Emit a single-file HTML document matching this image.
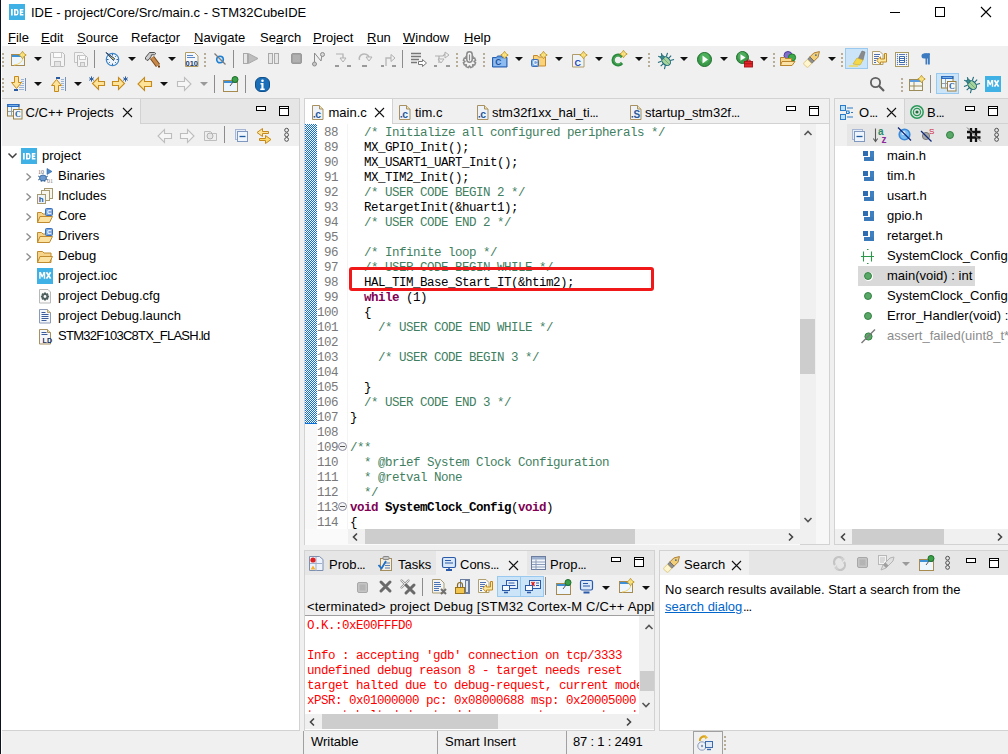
<!DOCTYPE html>
<html><head><meta charset="utf-8"><style>
html,body{margin:0;padding:0}
body{width:1008px;height:754px;overflow:hidden;position:relative;background:#f0f0f0;font-family:"Liberation Sans",sans-serif}
.a{position:absolute}
.s{font-family:"Liberation Sans",sans-serif;white-space:pre;line-height:normal}
.m{font-family:"Liberation Mono",monospace;white-space:pre;line-height:normal;letter-spacing:-0.5px}
svg.a{overflow:visible}
</style></head><body>
<div class="a" style="left:0px;top:0px;width:1008px;height:46px;background:#fff;"></div>
<div class="a" style="left:0px;top:0px;width:1px;height:754px;background:#2b2f3a;"></div>
<svg class="a" style="left:9px;top:4px" width="16" height="16" viewBox="0 0 16 16"><rect width="16" height="16" fill="#3fb1e5"/><rect x="2" y="5" width="1.7" height="6.5" fill="#fff"/><path d="M5 5h2.2a2.3 2.3 0 0 1 2.3 2.3v1.9a2.3 2.3 0 0 1-2.3 2.3h-2.2zM6.6 6.4v3.7h0.6a0.9 0.9 0 0 0 0.9-0.9v-1.9a0.9 0.9 0 0 0-0.9-0.9z" fill="#fff" fill-rule="evenodd"/><path d="M10.8 5h3.6v1.4h-2v1.2h1.8v1.3h-1.8v1.2h2v1.4h-3.6z" fill="#fff"/></svg>
<div class="a s" style="left:31px;top:5.23px;font-size:13px;color:#000;">IDE - project/Core/Src/main.c - STM32CubeIDE</div>
<div class="a" style="left:890px;top:12px;width:10px;height:1px;background:#000;"></div>
<div class="a" style="left:935px;top:7px;width:8px;height:8px;border:1px solid #000;background:transparent;"></div>
<svg class="a" style="left:981px;top:7px" width="10" height="10" viewBox="0 0 10 10"><path d="M0 0L10 10M10 0L0 10" stroke="#000" stroke-width="1.1"/></svg>
<div class="a s" style="left:8px;top:30.23px;font-size:13px;color:#000;">File</div>
<div class="a s" style="left:41px;top:30.23px;font-size:13px;color:#000;">Edit</div>
<div class="a s" style="left:77px;top:30.23px;font-size:13px;color:#000;">Source</div>
<div class="a s" style="left:131px;top:30.23px;font-size:13px;color:#000;">Refactor</div>
<div class="a s" style="left:194px;top:30.23px;font-size:13px;color:#000;">Navigate</div>
<div class="a s" style="left:260px;top:30.23px;font-size:13px;color:#000;">Search</div>
<div class="a s" style="left:313px;top:30.23px;font-size:13px;color:#000;">Project</div>
<div class="a s" style="left:367px;top:30.23px;font-size:13px;color:#000;">Run</div>
<div class="a s" style="left:403px;top:30.23px;font-size:13px;color:#000;">Window</div>
<div class="a s" style="left:464px;top:30.23px;font-size:13px;color:#000;">Help</div>
<div class="a" style="left:8px;top:43px;width:8px;height:1px;background:#000;"></div>
<div class="a" style="left:41px;top:43px;width:9px;height:1px;background:#000;"></div>
<div class="a" style="left:77px;top:43px;width:9px;height:1px;background:#000;"></div>
<div class="a" style="left:165px;top:43px;width:5px;height:1px;background:#000;"></div>
<div class="a" style="left:194px;top:43px;width:9px;height:1px;background:#000;"></div>
<div class="a" style="left:276px;top:43px;width:7px;height:1px;background:#000;"></div>
<div class="a" style="left:313px;top:43px;width:9px;height:1px;background:#000;"></div>
<div class="a" style="left:367px;top:43px;width:9px;height:1px;background:#000;"></div>
<div class="a" style="left:403px;top:43px;width:12px;height:1px;background:#000;"></div>
<div class="a" style="left:464px;top:43px;width:9px;height:1px;background:#000;"></div>
<div class="a" style="left:1px;top:98px;width:297px;height:631px;border:1px solid #d2d2d2;background:#fff;"></div>
<div class="a" style="left:2px;top:99px;width:297px;height:24px;background:#e6e6e6;"></div>
<div class="a" style="left:2px;top:99px;width:138px;height:25px;background:#f0f0f0;"></div>
<div class="a" style="left:140px;top:99px;width:1px;height:24px;background:#d2d2d2;"></div>
<div class="a" style="left:140px;top:123px;width:159px;height:1px;background:#d2d2d2;"></div>
<div class="a" style="left:2px;top:124px;width:297px;height:22px;background:#f0f0f0;"></div>
<div class="a s" style="left:25.5px;top:105.23px;font-size:13px;color:#000;">C/C++ Projects</div>
<div class="a" style="left:304px;top:98px;width:524px;height:445px;border:1px solid #d2d2d2;background:#fff;"></div>
<div class="a" style="left:305px;top:99px;width:524px;height:25px;background:#f0f0f0;"></div>
<div class="a" style="left:305px;top:99px;width:87px;height:25px;background:#fff;"></div>
<div class="a" style="left:392px;top:99px;width:1px;height:25px;background:#d2d2d2;"></div>
<div class="a" style="left:392px;top:123px;width:437px;height:1px;background:#d2d2d2;"></div>
<div class="a s" style="left:328.5px;top:105.23px;font-size:13px;color:#000;">main.c</div>
<div class="a s" style="left:415px;top:105.23px;font-size:13px;color:#000;">tim.c</div>
<div class="a s" style="left:492px;top:105.23px;font-size:13px;color:#000;">stm32f1xx_hal_ti<span style="letter-spacing:-0.9px">...</span></div>
<div class="a s" style="left:645px;top:105.23px;font-size:13px;color:#000;">startup_stm32f<span style="letter-spacing:-0.9px">...</span></div>
<div class="a" style="left:834px;top:98px;width:173px;height:445px;border:1px solid #d2d2d2;background:#fff;"></div>
<div class="a" style="left:835px;top:99px;width:173px;height:24px;background:#e6e6e6;"></div>
<div class="a" style="left:835px;top:99px;width:69px;height:25px;background:#f0f0f0;"></div>
<div class="a" style="left:904px;top:99px;width:1px;height:24px;background:#d2d2d2;"></div>
<div class="a" style="left:904px;top:123px;width:104px;height:1px;background:#d2d2d2;"></div>
<div class="a" style="left:835px;top:124px;width:173px;height:22px;background:#f0f0f0;"></div>
<div class="a" style="left:847px;top:124px;width:161px;height:22px;background:#e6e6e6;"></div>
<div class="a s" style="left:859px;top:105.23px;font-size:13px;color:#000;">O<span style="letter-spacing:-0.9px">...</span></div>
<div class="a s" style="left:927px;top:105.23px;font-size:13px;color:#000;">B<span style="letter-spacing:-0.9px">...</span></div>
<div class="a" style="left:304px;top:550px;width:349px;height:179px;border:1px solid #d2d2d2;background:#fff;"></div>
<div class="a" style="left:305px;top:551px;width:349px;height:24px;background:#e6e6e6;"></div>
<div class="a" style="left:436px;top:551px;width:91px;height:24px;background:#f0f0f0;"></div>
<div class="a" style="left:305px;top:575px;width:349px;height:40px;background:#f0f0f0;"></div>
<div class="a" style="left:305px;top:615px;width:349px;height:1px;background:#a0a0a0;"></div>
<div class="a s" style="left:329px;top:557.24px;font-size:13px;color:#000;">Prob<span style="letter-spacing:-0.9px">...</span></div>
<div class="a s" style="left:398px;top:557.24px;font-size:13px;color:#000;">Tasks</div>
<div class="a s" style="left:460px;top:557.24px;font-size:13px;color:#000;">Cons<span style="letter-spacing:-0.9px">...</span></div>
<div class="a s" style="left:550px;top:557.24px;font-size:13px;color:#000;">Prop<span style="letter-spacing:-0.9px">...</span></div>
<div class="a s" style="left:307px;top:599.24px;font-size:13px;color:#000;letter-spacing:0.189px;">&lt;terminated&gt; project Debug [STM32 Cortex-M C/C++ Appl</div>
<div class="a" style="left:659px;top:550px;width:348px;height:179px;border:1px solid #d2d2d2;background:#fff;"></div>
<div class="a" style="left:660px;top:551px;width:348px;height:24px;background:#e6e6e6;"></div>
<div class="a" style="left:660px;top:551px;width:89px;height:24px;background:#f0f0f0;"></div>
<div class="a s" style="left:684px;top:557.24px;font-size:13px;color:#000;">Search</div>
<div class="a s" style="left:665px;top:582.24px;font-size:13px;color:#000;">No search results available. Start a search from the</div>
<div class="a s" style="left:665px;top:599.24px;font-size:13px;color:#0066cc;text-decoration:underline">search dialog</div>
<div class="a s" style="left:743px;top:599.24px;font-size:13px;color:#000;"><span style="letter-spacing:-0.9px">...</span></div>
<div class="a s" style="left:311px;top:734.24px;font-size:13px;color:#000;">Writable</div>
<div class="a s" style="left:445px;top:734.24px;font-size:13px;color:#000;">Smart Insert</div>
<div class="a s" style="left:573px;top:734.24px;font-size:13px;color:#000;letter-spacing:-0.215px;">87 : 1 : 2491</div>
<div class="a s" style="left:42px;top:148.24px;font-size:13px;color:#000;">project</div>
<div class="a s" style="left:58px;top:168.24px;font-size:13px;color:#000;">Binaries</div>
<div class="a s" style="left:58px;top:188.24px;font-size:13px;color:#000;">Includes</div>
<div class="a s" style="left:58px;top:208.24px;font-size:13px;color:#000;">Core</div>
<div class="a s" style="left:58px;top:228.24px;font-size:13px;color:#000;">Drivers</div>
<div class="a s" style="left:58px;top:248.24px;font-size:13px;color:#000;">Debug</div>
<div class="a s" style="left:58px;top:268.24px;font-size:13px;color:#000;">project.ioc</div>
<div class="a s" style="left:58px;top:288.24px;font-size:13px;color:#000;">project Debug.cfg</div>
<div class="a s" style="left:58px;top:308.24px;font-size:13px;color:#000;">project Debug.launch</div>
<div class="a s" style="left:58px;top:328.24px;font-size:13px;color:#000;letter-spacing:-0.734px;">STM32F103C8TX_FLASH.ld</div>
<div class="a" style="left:305px;top:124px;width:12px;height:421px;background:#f8f8f8;"></div>
<div class="a" style="left:305px;top:423px;width:12px;height:1px;background:#0a6fd8;"></div>
<div class="a" style="left:305px;top:124px;width:12px;height:299px;background:#3d8ee8;background-image:repeating-conic-gradient(#0a6fd8 0 25%,#fff 0 50%);background-size:2px 2px;background-position:0 1px"></div>
<div class="a" style="left:347px;top:124px;width:1px;height:405px;background:#f4f4f4;"></div>
<div class="a m" style="left:317px;top:125.59px;font-size:12.5px;color:#787878;"> 88</div>
<div class="a m" style="left:350px;top:125.59px;font-size:12.5px;color:#000;">  <span style="color:#3f7f5f;">/* Initialize all configured peripherals */</span></div>
<div class="a m" style="left:317px;top:140.59px;font-size:12.5px;color:#787878;"> 89</div>
<div class="a m" style="left:350px;top:140.59px;font-size:12.5px;color:#000;">  MX_GPIO_Init();</div>
<div class="a m" style="left:317px;top:155.59px;font-size:12.5px;color:#787878;"> 90</div>
<div class="a m" style="left:350px;top:155.59px;font-size:12.5px;color:#000;">  MX_USART1_UART_Init();</div>
<div class="a m" style="left:317px;top:170.59px;font-size:12.5px;color:#787878;"> 91</div>
<div class="a m" style="left:350px;top:170.59px;font-size:12.5px;color:#000;">  MX_TIM2_Init();</div>
<div class="a m" style="left:317px;top:185.59px;font-size:12.5px;color:#787878;"> 92</div>
<div class="a m" style="left:350px;top:185.59px;font-size:12.5px;color:#000;">  <span style="color:#3f7f5f;">/* USER CODE BEGIN 2 */</span></div>
<div class="a m" style="left:317px;top:200.59px;font-size:12.5px;color:#787878;"> 93</div>
<div class="a m" style="left:350px;top:200.59px;font-size:12.5px;color:#000;">  RetargetInit(&amp;huart1);</div>
<div class="a m" style="left:317px;top:215.59px;font-size:12.5px;color:#787878;"> 94</div>
<div class="a m" style="left:350px;top:215.59px;font-size:12.5px;color:#000;">  <span style="color:#3f7f5f;">/* USER CODE END 2 */</span></div>
<div class="a m" style="left:317px;top:230.59px;font-size:12.5px;color:#787878;"> 95</div>
<div class="a m" style="left:317px;top:245.59px;font-size:12.5px;color:#787878;"> 96</div>
<div class="a m" style="left:350px;top:245.59px;font-size:12.5px;color:#000;">  <span style="color:#3f7f5f;">/* Infinite loop */</span></div>
<div class="a m" style="left:317px;top:260.59px;font-size:12.5px;color:#787878;"> 97</div>
<div class="a m" style="left:350px;top:260.59px;font-size:12.5px;color:#000;">  <span style="color:#3f7f5f;">/* USER CODE BEGIN WHILE */</span></div>
<div class="a m" style="left:317px;top:275.59px;font-size:12.5px;color:#787878;"> 98</div>
<div class="a m" style="left:350px;top:275.59px;font-size:12.5px;color:#000;">  HAL_TIM_Base_Start_IT(&amp;htim2);</div>
<div class="a m" style="left:317px;top:290.59px;font-size:12.5px;color:#787878;"> 99</div>
<div class="a m" style="left:350px;top:290.59px;font-size:12.5px;color:#000;">  <span style="color:#7f0055;font-weight:bold;">while</span> (1)</div>
<div class="a m" style="left:317px;top:305.59px;font-size:12.5px;color:#787878;">100</div>
<div class="a m" style="left:350px;top:305.59px;font-size:12.5px;color:#000;">  {</div>
<div class="a m" style="left:317px;top:320.59px;font-size:12.5px;color:#787878;">101</div>
<div class="a m" style="left:350px;top:320.59px;font-size:12.5px;color:#000;">    <span style="color:#3f7f5f;">/* USER CODE END WHILE */</span></div>
<div class="a m" style="left:317px;top:335.59px;font-size:12.5px;color:#787878;">102</div>
<div class="a m" style="left:317px;top:350.59px;font-size:12.5px;color:#787878;">103</div>
<div class="a m" style="left:350px;top:350.59px;font-size:12.5px;color:#000;">    <span style="color:#3f7f5f;">/* USER CODE BEGIN 3 */</span></div>
<div class="a m" style="left:317px;top:365.59px;font-size:12.5px;color:#787878;">104</div>
<div class="a m" style="left:317px;top:380.59px;font-size:12.5px;color:#787878;">105</div>
<div class="a m" style="left:350px;top:380.59px;font-size:12.5px;color:#000;">  }</div>
<div class="a m" style="left:317px;top:395.59px;font-size:12.5px;color:#787878;">106</div>
<div class="a m" style="left:350px;top:395.59px;font-size:12.5px;color:#000;">  <span style="color:#3f7f5f;">/* USER CODE END 3 */</span></div>
<div class="a m" style="left:317px;top:410.59px;font-size:12.5px;color:#787878;">107</div>
<div class="a m" style="left:350px;top:410.59px;font-size:12.5px;color:#000;">}</div>
<div class="a m" style="left:317px;top:425.59px;font-size:12.5px;color:#787878;">108</div>
<div class="a m" style="left:317px;top:440.59px;font-size:12.5px;color:#787878;">109</div>
<div class="a m" style="left:350px;top:440.59px;font-size:12.5px;color:#000;"><span style="color:#3f7f5f;">/**</span></div>
<div class="a m" style="left:317px;top:455.59px;font-size:12.5px;color:#787878;">110</div>
<div class="a m" style="left:350px;top:455.59px;font-size:12.5px;color:#000;"><span style="color:#3f7f5f;">  * @brief System Clock Configuration</span></div>
<div class="a m" style="left:317px;top:470.59px;font-size:12.5px;color:#787878;">111</div>
<div class="a m" style="left:350px;top:470.59px;font-size:12.5px;color:#000;"><span style="color:#3f7f5f;">  * @retval None</span></div>
<div class="a m" style="left:317px;top:485.59px;font-size:12.5px;color:#787878;">112</div>
<div class="a m" style="left:350px;top:485.59px;font-size:12.5px;color:#000;"><span style="color:#3f7f5f;">  */</span></div>
<div class="a m" style="left:317px;top:500.59px;font-size:12.5px;color:#787878;">113</div>
<div class="a m" style="left:350px;top:500.59px;font-size:12.5px;color:#000;"><span style="color:#7f0055;font-weight:bold;">void</span> <span style="font-weight:bold;">SystemClock_Config</span>(<span style="color:#7f0055;font-weight:bold;">void</span>)</div>
<div class="a m" style="left:317px;top:515.59px;font-size:12.5px;color:#787878;">114</div>
<div class="a m" style="left:350px;top:515.59px;font-size:12.5px;color:#000;">{</div>
<div class="a" style="left:349px;top:267px;width:299px;height:18px;border:3px solid #f01818;border-radius:3px"></div>
<div class="a" style="left:800px;top:124px;width:16px;height:405px;background:#f0f0f0;"></div>
<div class="a" style="left:816px;top:124px;width:13px;height:420px;background:#f7f7f7;"></div>
<div class="a" style="left:800px;top:319px;width:15px;height:55px;background:#cdcdcd;"></div>
<div class="a" style="left:305px;top:529px;width:495px;height:16px;background:#fafafa;"></div>
<div class="a" style="left:348px;top:529px;width:452px;height:15px;background:#f0f0f0;"></div>
<div class="a" style="left:365px;top:529px;width:270px;height:15px;background:#cdcdcd;"></div>
<div class="a" style="left:800px;top:529px;width:16px;height:15px;background:#f0f0f0;"></div>
<div class="a" style="left:858px;top:266px;width:117px;height:20px;background:#d9d9d9;"></div>
<div class="a" style="left:863.5px;top:271.5px;width:9px;height:9px;border-radius:50%;background:#fff"></div>
<div class="a s" style="left:887px;top:148.24px;font-size:13px;color:#000;">main.h</div>
<div class="a s" style="left:887px;top:168.24px;font-size:13px;color:#000;">tim.h</div>
<div class="a s" style="left:887px;top:188.24px;font-size:13px;color:#000;">usart.h</div>
<div class="a s" style="left:887px;top:208.24px;font-size:13px;color:#000;">gpio.h</div>
<div class="a s" style="left:887px;top:228.24px;font-size:13px;color:#000;">retarget.h</div>
<div class="a s" style="left:887px;top:248.24px;font-size:13px;color:#000;">SystemClock_Config(void)</div>
<div class="a s" style="left:887px;top:268.24px;font-size:13px;color:#000;">main(void) : int</div>
<div class="a s" style="left:887px;top:288.24px;font-size:13px;color:#000;">SystemClock_Config(void)</div>
<div class="a s" style="left:887px;top:308.24px;font-size:13px;color:#000;">Error_Handler(void) : void</div>
<div class="a s" style="left:887px;top:328.24px;font-size:13px;color:#8c8c8c;">assert_failed(uint8_t*, uint32_t) : void</div>
<div class="a" style="left:835px;top:529px;width:173px;height:15px;background:#f0f0f0;"></div>
<div class="a" style="left:852px;top:529px;width:92px;height:15px;background:#cdcdcd;"></div>
<div class="a" style="left:305px;top:616px;width:334px;height:96px;overflow:hidden">
<div class="a m" style="left:2px;top:2.59px;font-size:12.5px;color:#ff0000;">O.K.:0xE00FFFD0</div>
<div class="a m" style="left:2px;top:17.59px;font-size:12.5px;color:#ff0000;"></div>
<div class="a m" style="left:2px;top:32.59px;font-size:12.5px;color:#ff0000;">Info : accepting &#x27;gdb&#x27; connection on tcp/3333</div>
<div class="a m" style="left:2px;top:47.59px;font-size:12.5px;color:#ff0000;">undefined debug reason 8 - target needs reset</div>
<div class="a m" style="left:2px;top:62.59px;font-size:12.5px;color:#ff0000;">target halted due to debug-request, current mode: Thread</div>
<div class="a m" style="left:2px;top:77.59px;font-size:12.5px;color:#ff0000;">xPSR: 0x01000000 pc: 0x08000688 msp: 0x20005000</div>
<div class="a m" style="left:2px;top:92.59px;font-size:12.5px;color:#ff0000;">target halted due to debug-request, current mode: Thread</div>
</div>
<div class="a" style="left:639px;top:616px;width:15px;height:98px;background:#f0f0f0;"></div>
<div class="a" style="left:640px;top:671px;width:14px;height:20px;background:#cdcdcd;"></div>
<div class="a" style="left:305px;top:714px;width:349px;height:15px;background:#f0f0f0;"></div>
<div class="a" style="left:322px;top:714px;width:176px;height:15px;background:#cdcdcd;"></div>
<div class="a" style="left:303px;top:731px;width:1px;height:23px;background:#a0a0a0;"></div>
<div class="a" style="left:437px;top:731px;width:1px;height:23px;background:#a0a0a0;"></div>
<div class="a" style="left:566px;top:731px;width:1px;height:23px;background:#a0a0a0;"></div>
<div class="a" style="left:693px;top:731px;width:28px;height:22px;border:1px solid #a0a0a0;background:#f0f0f0;"></div>
<div class="a" style="left:2px;top:53px;width:2px;height:2px;background:#b8ad98;"></div>
<div class="a" style="left:2px;top:57px;width:2px;height:2px;background:#b8ad98;"></div>
<div class="a" style="left:2px;top:61px;width:2px;height:2px;background:#b8ad98;"></div>
<div class="a" style="left:2px;top:65px;width:2px;height:2px;background:#b8ad98;"></div>
<svg class="a" style="left:11px;top:52px" width="16" height="16" viewBox="0 0 16 16"><rect x="0.5" y="2.5" width="13" height="11" fill="#eef6fd" stroke="#a68a4e"/><rect x="1" y="3" width="12" height="2" fill="#3d8fd6"/><path d="M3 13 Q11 12 12 6" stroke="#f2d36b" fill="none"/><g transform="translate(7.5,-1)"><path d="M4 0.3 L5.4 2.6 L7.7 4 L5.4 5.4 L4 7.7 L2.6 5.4 L0.3 4 L2.6 2.6 Z" fill="#fff2b3" stroke="#c39a26" stroke-width="1"/><path d="M4 2V6M2 4H6" stroke="#f7dc6a" stroke-width="1"/></g></svg>
<svg class="a" style="left:34px;top:57px" width="8" height="4" viewBox="0 0 8 4"><path d="M0 0H8L4 4Z" fill="#111"/></svg>
<svg class="a" style="left:50px;top:52px" width="16" height="16" viewBox="0 0 16 16"><path d="M1.5 0.5h11l2 2v11a1 1 0 0 1-1 1h-12a1 1 0 0 1-1-1v-12a1 1 0 0 1 1-1z" fill="#f4f4f4" stroke="#b8b8b8"/><rect x="3.5" y="0.5" width="8" height="5" fill="#fbfbfb" stroke="#c8c8c8"/><rect x="4.5" y="9.5" width="6" height="5" fill="#e4e4e4" stroke="#c0c0c0"/></svg>
<svg class="a" style="left:73px;top:52px" width="16" height="16" viewBox="0 0 16 16"><path d="M1.5 0.5h8l2 2v8h-10z" fill="#f4f4f4" stroke="#c4c4c4"/><path d="M4.5 3.5h8l2 2v8a1 1 0 0 1-1 1h-8a1 1 0 0 1-1-1z" fill="#f4f4f4" stroke="#b8b8b8"/><rect x="6.5" y="3.5" width="6" height="4" fill="#fbfbfb" stroke="#c8c8c8"/><rect x="7.5" y="10.5" width="4" height="4" fill="#e4e4e4" stroke="#c0c0c0"/></svg>
<div class="a" style="left:94px;top:50px;width:1px;height:18px;background:#8c8c8c;"></div>
<svg class="a" style="left:105px;top:52px" width="16" height="16" viewBox="0 0 16 16"><circle cx="7.5" cy="7.5" r="6.2" fill="#eef4fb" stroke="#3b85c8" stroke-width="1.2"/><path d="M7.5 2v1.5M7.5 11.5V13M2 7.5h1.5M11.5 7.5H13M3.8 3.8l1 1M10.2 10.2l1 1M3.8 11.2l1-1M11.2 3.8l-1 1" stroke="#22508a" stroke-width="0.9"/><path d="M1 0.5L8.5 8.5L9.5 6.5Z" fill="#f0d36a" stroke="#1f3f6e" stroke-width="1"/></svg>
<svg class="a" style="left:128px;top:57px" width="8" height="4" viewBox="0 0 8 4"><path d="M0 0H8L4 4Z" fill="#111"/></svg>
<svg class="a" style="left:144px;top:51px" width="17" height="17" viewBox="0 0 17 17"><path d="M8 6.5L14 14.5" stroke="#7a4a1a" stroke-width="5.2" stroke-linecap="butt"/><path d="M8 6.5L14 14.5" stroke="#c9894a" stroke-width="3.2"/><path d="M14 15.5h2" stroke="#6a3a10" stroke-width="2"/><path d="M1.5 6.5L4.5 2.8L5.5 1.5H10.5L11.8 2.6L10.5 3.8H7.5L7 5.5L5 8.5L3 9.5L1.5 8Z" fill="#cdcdcd" stroke="#3c3c3c" stroke-width="0.9"/></svg>
<svg class="a" style="left:168px;top:57px" width="8" height="4" viewBox="0 0 8 4"><path d="M0 0H8L4 4Z" fill="#111"/></svg>
<svg class="a" style="left:185px;top:52px" width="16" height="16" viewBox="0 0 16 16"><path d="M0.5 0.5h9l3.5 3.5v10.5h-12.5z" fill="#f4f7fb" stroke="#b29c62"/><path d="M2 3.5h6M2 5.5h8" stroke="#5b88c5" stroke-width="1"/><text x="0.5" y="14" font-family="Liberation Sans" font-weight="bold" font-size="7.5" fill="#1e3e6e">010</text></svg>
<div class="a" style="left:204px;top:53px;width:2px;height:2px;background:#b8ad98;"></div>
<div class="a" style="left:204px;top:57px;width:2px;height:2px;background:#b8ad98;"></div>
<div class="a" style="left:204px;top:61px;width:2px;height:2px;background:#b8ad98;"></div>
<div class="a" style="left:204px;top:65px;width:2px;height:2px;background:#b8ad98;"></div>
<svg class="a" style="left:214px;top:53px" width="13" height="13" viewBox="0 0 13 13"><circle cx="6" cy="6.5" r="3.3" fill="#cfe6fb" stroke="#1e7fd0" stroke-width="1.6"/><path d="M0.5 0.5 L11.5 11.5" stroke="#7a7a7a" stroke-width="1.2"/></svg>
<div class="a" style="left:233px;top:50px;width:1px;height:18px;background:#8c8c8c;"></div>
<svg class="a" style="left:243px;top:52px" width="16" height="16" viewBox="0 0 16 16"><rect x="0.5" y="1.5" width="4" height="10" fill="#e6e6e6" stroke="#a9a9a9"/><path d="M5.5 1.5 L15 6.5 L5.5 11.5Z" fill="#bdbdbd" stroke="#a9a9a9"/></svg>
<svg class="a" style="left:268px;top:52px" width="16" height="16" viewBox="0 0 16 16"><rect x="0.5" y="1.5" width="4" height="10" fill="#e6e6e6" stroke="#a9a9a9"/><rect x="6.5" y="1.5" width="4" height="10" fill="#e6e6e6" stroke="#a9a9a9"/></svg>
<svg class="a" style="left:291px;top:52px" width="16" height="16" viewBox="0 0 16 16"><rect x="0.5" y="1.5" width="10" height="10" rx="1.5" fill="#a3a3a3" stroke="#9a9a9a"/><rect x="2" y="3" width="7" height="7" fill="#b0b0b0"/></svg>
<svg class="a" style="left:312px;top:52px" width="16" height="16" viewBox="0 0 16 16"><path d="M2.5 12 L2.5 1 L9 9 L10 3" stroke="#8c8c8c" fill="none" stroke-width="1"/><circle cx="2.5" cy="12" r="2" fill="#c8c8c8" stroke="#8c8c8c"/><circle cx="10.5" cy="2.5" r="2" fill="#d8d8d8" stroke="#8c8c8c"/></svg>
<svg class="a" style="left:335px;top:52px" width="16" height="16" viewBox="0 0 16 16"><path d="M1 2h7v4" stroke="#b0b0b0" fill="none" stroke-width="1.2"/><path d="M5 6h6l-3 4z" fill="#f2f2f2" stroke="#b0b0b0"/><rect x="0" y="13" width="4" height="2" fill="#9a9a9a"/><rect x="12" y="13" width="4" height="2" fill="#9a9a9a"/></svg>
<svg class="a" style="left:358px;top:52px" width="16" height="16" viewBox="0 0 16 16"><path d="M1.5 8 A5 4.5 0 0 1 11 5" stroke="#b8b8b8" fill="none" stroke-width="1.6"/><path d="M8 5h6l-3 4z" fill="#f2f2f2" stroke="#b0b0b0"/><rect x="4" y="13" width="5" height="2" fill="#9a9a9a"/></svg>
<svg class="a" style="left:381px;top:52px" width="16" height="16" viewBox="0 0 16 16"><path d="M5 14V6h6" stroke="#b8b8b8" fill="none" stroke-width="1.4"/><path d="M10 2.5l4 3.5-4 3.5z" fill="#f2f2f2" stroke="#b0b0b0"/><rect x="0" y="13" width="3" height="2" fill="#9a9a9a"/><rect x="11" y="13" width="4" height="2" fill="#9a9a9a"/></svg>
<div class="a" style="left:402px;top:50px;width:1px;height:18px;background:#8c8c8c;"></div>
<svg class="a" style="left:411px;top:52px" width="16" height="16" viewBox="0 0 16 16"><path d="M0 1.5h10M0 4.5h10M0 7.5h8M0 10.5h6" stroke="#777" stroke-width="1.3"/><path d="M7.5 9.5h4v-2l4 3.5-4 3.5v-2h-4z" fill="#fff" stroke="#777"/></svg>
<svg class="a" style="left:434px;top:51px" width="16" height="16" viewBox="0 0 16 16"><path d="M1 5h8M5 5v7M9 5l3-3" stroke="#b0b0b0" fill="none" stroke-width="1.2"/><path d="M11 1l4 3-4 3z" fill="#f2f2f2" stroke="#b0b0b0"/><path d="M4 8h6l-3 4z" fill="#f2f2f2" stroke="#b0b0b0"/><rect x="0" y="14" width="3" height="2" fill="#9a9a9a"/><rect x="12" y="14" width="4" height="2" fill="#9a9a9a"/></svg>
<div class="a" style="left:456px;top:53px;width:2px;height:2px;background:#b8ad98;"></div>
<div class="a" style="left:456px;top:57px;width:2px;height:2px;background:#b8ad98;"></div>
<div class="a" style="left:456px;top:61px;width:2px;height:2px;background:#b8ad98;"></div>
<div class="a" style="left:456px;top:65px;width:2px;height:2px;background:#b8ad98;"></div>
<svg class="a" style="left:462px;top:51px" width="16" height="16" viewBox="0 0 16 16"><path d="M13.59 11.69 L12.64 13.96 L10.79 13.71 L10.71 13.79 L10.96 15.64 L8.69 16.59 L7.56 15.10 L7.44 15.10 L6.31 16.59 L4.04 15.64 L4.29 13.79 L4.21 13.71 L2.36 13.96 L1.41 11.69 L2.90 10.56 L2.90 10.44 L1.41 9.31 L2.36 7.04 L4.21 7.29 L4.29 7.21 L4.04 5.36 L6.31 4.41 L7.44 5.90 L7.56 5.90 L8.69 4.41 L10.96 5.36 L10.71 7.21 L10.79 7.29 L12.64 7.04 L13.59 9.31 L12.10 10.44 L12.10 10.56Z" fill="#f2f2f2" stroke="#8a8a8a" stroke-width="1.5"/><rect x="4.8" y="0.8" width="5.4" height="10.5" rx="2.7" fill="#f6f6f6" stroke="#8a8a8a" stroke-width="1.5"/><path d="M7.5 3.5v6" stroke="#8a8a8a" stroke-width="1.2"/></svg>
<div class="a" style="left:483px;top:53px;width:2px;height:2px;background:#b8ad98;"></div>
<div class="a" style="left:483px;top:57px;width:2px;height:2px;background:#b8ad98;"></div>
<div class="a" style="left:483px;top:61px;width:2px;height:2px;background:#b8ad98;"></div>
<div class="a" style="left:483px;top:65px;width:2px;height:2px;background:#b8ad98;"></div>
<svg class="a" style="left:492px;top:52px" width="16" height="16" viewBox="0 0 16 16"><path d="M0.5 5.5h4l1-1.5h4l1 1.5h4.5v9.5h-14.5z" fill="#5f9be0" stroke="#2a5fb0"/><path d="M1.5 6.5h12.5v7.5h-12.5z" fill="#8fbcf0"/><text x="3.2" y="13.3" font-family="Liberation Sans" font-weight="bold" font-size="8.5" fill="#1c4f9c">C</text><g transform="translate(8.5,-1)"><path d="M4 0.3 L5.4 2.6 L7.7 4 L5.4 5.4 L4 7.7 L2.6 5.4 L0.3 4 L2.6 2.6 Z" fill="#fff2b3" stroke="#c39a26" stroke-width="1"/><path d="M4 2V6M2 4H6" stroke="#f7dc6a" stroke-width="1"/></g></svg>
<svg class="a" style="left:515px;top:57px" width="8" height="4" viewBox="0 0 8 4"><path d="M0 0H8L4 4Z" fill="#111"/></svg>
<svg class="a" style="left:531px;top:52px" width="16" height="16" viewBox="0 0 16 16"><path d="M2.5 3.5h4l1 1.5h7v9h-12z" fill="#f9d27a" stroke="#c68a2e"/><rect x="0.5" y="7.5" width="7" height="7" rx="1" fill="#7aa8e0" stroke="#3d6fb8"/><text x="1.8" y="13.4" font-family="Liberation Sans" font-weight="bold" font-size="6.5" fill="#fff">C</text><g transform="translate(8.5,-1)"><path d="M4 0.3 L5.4 2.6 L7.7 4 L5.4 5.4 L4 7.7 L2.6 5.4 L0.3 4 L2.6 2.6 Z" fill="#fff2b3" stroke="#c39a26" stroke-width="1"/><path d="M4 2V6M2 4H6" stroke="#f7dc6a" stroke-width="1"/></g></svg>
<svg class="a" style="left:555px;top:57px" width="8" height="4" viewBox="0 0 8 4"><path d="M0 0H8L4 4Z" fill="#111"/></svg>
<svg class="a" style="left:572px;top:52px" width="16" height="16" viewBox="0 0 16 16"><path d="M0.5 2.5h8l3.5 3.5v9h-11.5z" fill="#eef3fa" stroke="#b19c68"/><text x="2.6" y="13.5" font-family="Liberation Sans" font-weight="bold" font-size="9" fill="#2448b8">C</text><g transform="translate(7.5,-1)"><path d="M4 0.3 L5.4 2.6 L7.7 4 L5.4 5.4 L4 7.7 L2.6 5.4 L0.3 4 L2.6 2.6 Z" fill="#fff2b3" stroke="#c39a26" stroke-width="1"/><path d="M4 2V6M2 4H6" stroke="#f7dc6a" stroke-width="1"/></g></svg>
<svg class="a" style="left:595px;top:57px" width="8" height="4" viewBox="0 0 8 4"><path d="M0 0H8L4 4Z" fill="#111"/></svg>
<svg class="a" style="left:611px;top:51px" width="16" height="16" viewBox="0 0 16 16"><path d="M11 5.9 A5 5 0 1 0 11 12.1" fill="none" stroke="#2a8a3e" stroke-width="3.2"/><path d="M10.5 6.6 A4.2 4.2 0 1 0 10.5 11.4" fill="none" stroke="#58b064" stroke-width="1"/><g transform="translate(8.5,-1)"><path d="M4 0.3 L5.4 2.6 L7.7 4 L5.4 5.4 L4 7.7 L2.6 5.4 L0.3 4 L2.6 2.6 Z" fill="#fff2b3" stroke="#c39a26" stroke-width="1"/><path d="M4 2V6M2 4H6" stroke="#f7dc6a" stroke-width="1"/></g></svg>
<svg class="a" style="left:635px;top:57px" width="8" height="4" viewBox="0 0 8 4"><path d="M0 0H8L4 4Z" fill="#111"/></svg>
<div class="a" style="left:648px;top:53px;width:2px;height:2px;background:#b8ad98;"></div>
<div class="a" style="left:648px;top:57px;width:2px;height:2px;background:#b8ad98;"></div>
<div class="a" style="left:648px;top:61px;width:2px;height:2px;background:#b8ad98;"></div>
<div class="a" style="left:648px;top:65px;width:2px;height:2px;background:#b8ad98;"></div>
<svg class="a" style="left:657px;top:52px" width="16" height="16" viewBox="0 0 16 16"><g transform="rotate(-45 8 8)"><path d="M4.6 6.5L1.2 4.8M4.3 9.3H0.6M4.6 12L1.2 14M11.4 6.5L14.8 4.8M11.7 9.3H15.4M11.4 12L14.8 14M7 3L5.8 0.6M9 3L10.2 0.6" stroke="#1e6a7a" stroke-width="1.1"/><ellipse cx="8" cy="9.6" rx="3.7" ry="4.9" fill="#a6d49c" stroke="#1e6a7a" stroke-width="1.1"/><circle cx="8" cy="4.2" r="1.9" fill="#3a8a8a" stroke="#1e6a7a" stroke-width="0.8"/><path d="M8 6.5V13.5" stroke="#6aa878" stroke-width="0.8"/></g></svg>
<svg class="a" style="left:680px;top:57px" width="8" height="4" viewBox="0 0 8 4"><path d="M0 0H8L4 4Z" fill="#111"/></svg>
<svg class="a" style="left:697px;top:52px" width="16" height="16" viewBox="0 0 16 16"><circle cx="7.5" cy="7.5" r="7" fill="#3a9a4a" stroke="#1f6e2c"/><circle cx="7.5" cy="6" r="5" fill="#5cc06a" opacity="0.6"/><path d="M5.5 3.5L11 7.5L5.5 11.5Z" fill="#fff"/></svg>
<svg class="a" style="left:720px;top:57px" width="8" height="4" viewBox="0 0 8 4"><path d="M0 0H8L4 4Z" fill="#111"/></svg>
<svg class="a" style="left:736px;top:51px" width="17" height="17" viewBox="0 0 17 17"><circle cx="6.5" cy="6.5" r="6" fill="#3a9a4a" stroke="#1f6e2c"/><circle cx="6" cy="5" r="4" fill="#62c070" opacity="0.5"/><path d="M4.5 3.2L9.5 6.5L4.5 9.8Z" fill="#fff"/><rect x="8.5" y="10.5" width="8" height="5.5" fill="#e0262a" stroke="#a81014" stroke-width="0.9"/><path d="M10.8 10.5v-1.3h3.4v1.3M8.5 12.8h8" stroke="#a81014" fill="none" stroke-width="0.9"/></svg>
<svg class="a" style="left:760px;top:57px" width="8" height="4" viewBox="0 0 8 4"><path d="M0 0H8L4 4Z" fill="#111"/></svg>
<div class="a" style="left:773px;top:53px;width:2px;height:2px;background:#b8ad98;"></div>
<div class="a" style="left:773px;top:57px;width:2px;height:2px;background:#b8ad98;"></div>
<div class="a" style="left:773px;top:61px;width:2px;height:2px;background:#b8ad98;"></div>
<div class="a" style="left:773px;top:65px;width:2px;height:2px;background:#b8ad98;"></div>
<svg class="a" style="left:780px;top:51px" width="16" height="16" viewBox="0 0 16 16"><circle cx="8" cy="4.5" r="4" fill="#7f6fc8" stroke="#4e3e99"/><circle cx="12" cy="6.5" r="3.6" fill="#3faa4a" stroke="#1f7a2a"/><path d="M0.5 6.5h4l1 1h6v7h-11z" fill="#f7d88a" stroke="#b8842e"/><path d="M2 10.5h13l-3 4h-11.5z" fill="#fbe3a8" stroke="#b8842e"/></svg>
<svg class="a" style="left:804px;top:51px" width="16" height="16" viewBox="0 0 16 16"><g transform="rotate(45 8 8)"><path d="M8 -2.5 L11 2.5 V8 H5 V2.5 Z" fill="#f0cf78" stroke="#a87a30" stroke-width="0.9"/><rect x="5" y="8" width="6" height="3.5" fill="#8e8e8e" stroke="#6a6a6a" stroke-width="0.8"/><path d="M5 11.5h6v4.5a1.5 1.5 0 0 1-1.5 1.5h-3a1.5 1.5 0 0 1-1.5-1.5z" fill="#fff6d0" stroke="#d8c070" stroke-width="0.8"/><circle cx="8" cy="2.5" r="0.8" fill="#2a5a9a"/></g></svg>
<svg class="a" style="left:828px;top:57px" width="8" height="4" viewBox="0 0 8 4"><path d="M0 0H8L4 4Z" fill="#111"/></svg>
<div class="a" style="left:841px;top:53px;width:2px;height:2px;background:#b8ad98;"></div>
<div class="a" style="left:841px;top:57px;width:2px;height:2px;background:#b8ad98;"></div>
<div class="a" style="left:841px;top:61px;width:2px;height:2px;background:#b8ad98;"></div>
<div class="a" style="left:841px;top:65px;width:2px;height:2px;background:#b8ad98;"></div>
<div class="a" style="left:845px;top:48px;width:21px;height:19px;background:#cce4f7;border:1px solid #99c9ef"></div>
<svg class="a" style="left:849px;top:50px" width="16" height="16" viewBox="0 0 16 16"><path d="M9 9 L13 1 L16 2 L14 10Z" fill="#8a8a8a" stroke="#6e6e6e" stroke-width="0.6"/><path d="M4 14 L8 8 L14 10 L11 15Z" fill="#f4d84a" stroke="#c9a82a" stroke-width="0.6"/><path d="M0 16h9" stroke="#f4d84a" stroke-width="1.4"/></svg>
<svg class="a" style="left:872px;top:51px" width="16" height="16" viewBox="0 0 16 16"><path d="M0.5 0.5h7.5l3 3v10h-10.5z" fill="#f8f8f6" stroke="#b0a070"/><path d="M2 3.5h6M2 5.5h5M2 7.5h4M2 9.5h2M2 11.5h2" stroke="#5070b0"/><path d="M12.5 2.5h2v8.5h-6v2.2l-3.8-3.7 3.8-3.7v2.2h4z" fill="#fde8a0" stroke="#c08a20" stroke-linejoin="round"/></svg>
<svg class="a" style="left:895px;top:52px" width="16" height="16" viewBox="0 0 16 16"><rect x="0.5" y="0.5" width="13" height="14" fill="#fbfbf8" stroke="#a89a60"/><rect x="1.9" y="1.9" width="1.2" height="1.2" fill="#5a78b8"/><rect x="1.9" y="3.9" width="1.2" height="1.2" fill="#5a78b8"/><rect x="1.9" y="5.9" width="1.2" height="1.2" fill="#5a78b8"/><rect x="1.9" y="7.9" width="1.2" height="1.2" fill="#5a78b8"/><rect x="1.9" y="9.9" width="1.2" height="1.2" fill="#5a78b8"/><rect x="1.9" y="11.9" width="1.2" height="1.2" fill="#5a78b8"/><rect x="10.9" y="1.9" width="1.2" height="1.2" fill="#5a78b8"/><rect x="10.9" y="3.9" width="1.2" height="1.2" fill="#5a78b8"/><rect x="10.9" y="5.9" width="1.2" height="1.2" fill="#5a78b8"/><rect x="10.9" y="7.9" width="1.2" height="1.2" fill="#5a78b8"/><rect x="10.9" y="9.9" width="1.2" height="1.2" fill="#5a78b8"/><rect x="10.9" y="11.9" width="1.2" height="1.2" fill="#5a78b8"/><path d="M4 2.5h6M4 12.5h6" stroke="#5a78b8"/><rect x="4" y="4" width="6" height="7" rx="0.8" fill="#3a6ab0"/><path d="M5 5.5h4M5 7.5h4M5 9.5h4" stroke="#fff" stroke-width="1"/></svg>
<svg class="a" style="left:920px;top:52px" width="16" height="16" viewBox="0 0 16 16"><path d="M4 1.5h5v5h-5a2.5 2.5 0 0 1 0-5z" fill="#3d7ac0"/><rect x="5.5" y="1.5" width="1.8" height="11" fill="#3d7ac0"/><rect x="8" y="1.5" width="1.8" height="11" fill="#3d7ac0"/><rect x="4" y="1.5" width="6" height="1.3" fill="#3d7ac0"/></svg>
<div class="a" style="left:2px;top:78px;width:2px;height:2px;background:#b8ad98;"></div>
<div class="a" style="left:2px;top:82px;width:2px;height:2px;background:#b8ad98;"></div>
<div class="a" style="left:2px;top:86px;width:2px;height:2px;background:#b8ad98;"></div>
<div class="a" style="left:2px;top:90px;width:2px;height:2px;background:#b8ad98;"></div>
<svg class="a" style="left:11px;top:76px" width="16" height="16" viewBox="0 0 16 16"><path d="M3.5 0.5h4v6h3l-5 6-5-6h3z" fill="#fde49a" stroke="#c58a1a"/><path d="M10 3.5h3M10 5.5h3M11 7.5h2M9 9.5h4M8 11.5h5M8 13.5h5" stroke="#9cb4d6"/><path d="M14.5 2v13" stroke="#7090c0"/><rect x="3" y="13" width="4" height="2" fill="#2a5aa0"/></svg>
<svg class="a" style="left:34px;top:82px" width="8" height="4" viewBox="0 0 8 4"><path d="M0 0H8L4 4Z" fill="#111"/></svg>
<svg class="a" style="left:51px;top:76px" width="16" height="16" viewBox="0 0 16 16"><path d="M3.5 15.5h4v-6h3l-5-6-5 6h3z" fill="#fde49a" stroke="#c58a1a"/><path d="M10 3.5h3M10 5.5h3M10 7.5h3M11 9.5h2M10 11.5h3M10 13.5h3" stroke="#9cb4d6"/><path d="M14.5 1v14" stroke="#7090c0"/><rect x="5" y="1" width="4" height="2" fill="#2a5aa0"/></svg>
<svg class="a" style="left:74px;top:82px" width="8" height="4" viewBox="0 0 8 4"><path d="M0 0H8L4 4Z" fill="#111"/></svg>
<svg class="a" style="left:89px;top:76px" width="16" height="16" viewBox="0 0 16 16"><path d="M15.5 5.5h-6v-4l-6 6 6 6v-4h6z" fill="#fde49a" stroke="#c58a1a" stroke-width="1.1"/><g transform="translate(2.5,3)"><g stroke="#2f5f9e" stroke-width="1"><path d="M0 -2.6V2.6M-2.3 -1.3L2.3 1.3M-2.3 1.3L2.3 -1.3"/></g></g></svg>
<svg class="a" style="left:112px;top:76px" width="16" height="16" viewBox="0 0 16 16"><path d="M0.5 5.5h6v-4l6 6-6 6v-4h-6z" fill="#fde49a" stroke="#c58a1a" stroke-width="1.1"/><g transform="translate(13.5,3)"><g stroke="#2f5f9e" stroke-width="1"><path d="M0 -2.6V2.6M-2.3 -1.3L2.3 1.3M-2.3 1.3L2.3 -1.3"/></g></g></svg>
<svg class="a" style="left:137px;top:77px" width="16" height="16" viewBox="0 0 16 16"><path d="M14.5 4.5h-7v-4l-6.5 6.5 6.5 6.5v-4h7z" fill="#fde49a" stroke="#c58a1a" stroke-width="1.1"/></svg>
<svg class="a" style="left:160px;top:82px" width="8" height="4" viewBox="0 0 8 4"><path d="M0 0H8L4 4Z" fill="#111"/></svg>
<svg class="a" style="left:177px;top:77px" width="16" height="16" viewBox="0 0 16 16"><path d="M0.5 4.5h7v-4l6.5 6.5-6.5 6.5v-4h-7z" fill="#f6f6f6" stroke="#bdbdbd" stroke-width="1.1"/></svg>
<svg class="a" style="left:200px;top:82px" width="8" height="4" viewBox="0 0 8 4"><path d="M0 0H8L4 4Z" fill="#9a9a9a"/></svg>
<div class="a" style="left:214px;top:75px;width:1px;height:18px;background:#8c8c8c;"></div>
<svg class="a" style="left:223px;top:76px" width="16" height="16" viewBox="0 0 16 16"><rect x="0.5" y="4.5" width="14" height="11" fill="#eef6fd" stroke="#a68a4e"/><rect x="1" y="5" width="13" height="2" fill="#3d8fd6"/><path d="M7 10 L10 6" stroke="#555" stroke-width="1"/><circle cx="12" cy="3.5" r="3" fill="#3aa04a" stroke="#1e6e2a"/></svg>
<div class="a" style="left:245px;top:75px;width:1px;height:18px;background:#8c8c8c;"></div>
<svg class="a" style="left:255px;top:77px" width="16" height="16" viewBox="0 0 16 16"><rect x="0.5" y="0.5" width="14" height="14" rx="5.5" fill="#1b6fb8" stroke="#0f4f8a"/><circle cx="7.5" cy="3.8" r="1.3" fill="#fff"/><path d="M5.5 6h3v5.5h1.2v1.5h-4.5v-1.5h1.2v-4h-0.9z" fill="#fff"/></svg>
<svg class="a" style="left:870px;top:77px" width="16" height="16" viewBox="0 0 16 16"><circle cx="5.5" cy="5.5" r="4.6" fill="none" stroke="#606060" stroke-width="1.8"/><path d="M8.8 8.8L14 14" stroke="#606060" stroke-width="2.2"/></svg>
<div class="a" style="left:901px;top:78px;width:2px;height:2px;background:#b8ad98;"></div>
<div class="a" style="left:901px;top:82px;width:2px;height:2px;background:#b8ad98;"></div>
<div class="a" style="left:901px;top:86px;width:2px;height:2px;background:#b8ad98;"></div>
<div class="a" style="left:901px;top:90px;width:2px;height:2px;background:#b8ad98;"></div>
<svg class="a" style="left:909px;top:76px" width="16" height="16" viewBox="0 0 16 16"><rect x="0.5" y="3.5" width="13" height="11" fill="#f6f6f0" stroke="#9c8c5a"/><rect x="1" y="4" width="12" height="2" fill="#5b9be0"/><path d="M5 6v8M1 10h12" stroke="#9c8c5a"/><g transform="translate(8.5,-1)"><path d="M4 0.3 L5.4 2.6 L7.7 4 L5.4 5.4 L4 7.7 L2.6 5.4 L0.3 4 L2.6 2.6 Z" fill="#fff2b3" stroke="#c39a26" stroke-width="1"/><path d="M4 2V6M2 4H6" stroke="#f7dc6a" stroke-width="1"/></g></svg>
<div class="a" style="left:930px;top:75px;width:1px;height:18px;background:#8c8c8c;"></div>
<div class="a" style="left:936px;top:73px;width:21px;height:19px;background:#cce4f7;border:1px solid #99c9ef"></div>
<svg class="a" style="left:941px;top:76px" width="16" height="16" viewBox="0 0 16 16"><rect x="0.5" y="0.5" width="11.5" height="11.5" fill="#e8f6fd" stroke="#9c8040"/><rect x="0" y="0" width="12.5" height="3" fill="#2a6ac0"/><path d="M1.5 1.5h9.5" stroke="#8cc4f0" stroke-width="0.8"/><path d="M4.5 3v9M1 7.5h6" stroke="#9aa0a8"/><rect x="6.5" y="5.5" width="8.5" height="9.5" fill="#f4f8fd" stroke="#9c8040"/><text x="8" y="12.8" font-family="Liberation Serif" font-weight="bold" font-size="8" fill="#1f5a9a">C</text></svg>
<svg class="a" style="left:963px;top:76px" width="16" height="16" viewBox="0 0 16 16"><g transform="rotate(-45 8 8)"><path d="M4.6 6.5L1.2 4.8M4.3 9.3H0.6M4.6 12L1.2 14M11.4 6.5L14.8 4.8M11.7 9.3H15.4M11.4 12L14.8 14M7 3L5.8 0.6M9 3L10.2 0.6" stroke="#1e6a7a" stroke-width="1.1"/><ellipse cx="8" cy="9.6" rx="3.7" ry="4.9" fill="#a6d49c" stroke="#1e6a7a" stroke-width="1.1"/><circle cx="8" cy="4.2" r="1.9" fill="#3a8a8a" stroke="#1e6a7a" stroke-width="0.8"/><path d="M8 6.5V13.5" stroke="#6aa878" stroke-width="0.8"/></g></svg>
<svg class="a" style="left:985px;top:76px" width="16" height="16" viewBox="0 0 16 16"><rect x="0" y="0" width="16" height="16" fill="#3fb1e5"/><path d="M2.2 10.8V4h1.8l1.2 3.3 1.2-3.3h1.8v6.8h-1.4v-4.3l-1 2.7h-1.2l-1-2.7v4.3z" fill="#fff"/><path d="M9.5 4.2L13.6 10.6M13.6 4.2L9.5 10.6" stroke="#fff" stroke-width="1.7"/></svg>
<svg class="a" style="left:7px;top:104px" width="16" height="16" viewBox="0 0 16 16"><rect x="0.5" y="0.5" width="11.5" height="11.5" fill="#e8f6fd" stroke="#9c8040"/><rect x="0" y="0" width="12.5" height="3" fill="#2a6ac0"/><path d="M1.5 1.5h9.5" stroke="#8cc4f0" stroke-width="0.8"/><path d="M4.5 3v9M1 7.5h6" stroke="#9aa0a8"/><rect x="6.5" y="5.5" width="8.5" height="9.5" fill="#f4f8fd" stroke="#9c8040"/><text x="8" y="12.8" font-family="Liberation Serif" font-weight="bold" font-size="8" fill="#1f5a9a">C</text></svg>
<svg class="a" style="left:123px;top:108px" width="10" height="10" viewBox="0 0 10 10"><path d="M0 0L9 9M9 0L0 9" stroke="#111" stroke-width="1.1"/></svg>
<svg class="a" style="left:256px;top:106px" width="10" height="5" viewBox="0 0 10 5"><rect x="0.5" y="0.5" width="9" height="4" fill="#fff" stroke="#000" stroke-width="1"/></svg>
<svg class="a" style="left:279px;top:106px" width="10" height="10" viewBox="0 0 10 10"><rect x="0.5" y="0.5" width="9" height="9" fill="#fff" stroke="#000" stroke-width="1"/><path d="M0.5 2.5h9" stroke="#000"/></svg>
<svg class="a" style="left:157px;top:129px" width="16" height="16" viewBox="0 0 16 16"><path d="M14.5 4.5h-7v-4l-6.5 6.5 6.5 6.5v-4h7z" fill="#f6f6f6" stroke="#bdbdbd" stroke-width="1.1"/></svg>
<svg class="a" style="left:180px;top:129px" width="16" height="16" viewBox="0 0 16 16"><path d="M0.5 4.5h7v-4l6.5 6.5-6.5 6.5v-4h-7z" fill="#f6f6f6" stroke="#bdbdbd" stroke-width="1.1"/></svg>
<svg class="a" style="left:202px;top:127px" width="16" height="16" viewBox="0 0 16 16"><path d="M2.5 4.5h6l2 2h4v7h-12z" fill="#efefef" stroke="#bdbdbd"/><circle cx="8" cy="9" r="3" fill="#e6e6e6" stroke="#b0b0b0"/></svg>
<div class="a" style="left:224px;top:126px;width:1px;height:17px;background:#8c8c8c;"></div>
<svg class="a" style="left:235px;top:129px" width="16" height="16" viewBox="0 0 16 16"><rect x="0.5" y="0.5" width="10" height="10" fill="#e4ecf7" stroke="#a8b8d4"/><rect x="2.5" y="2.5" width="10" height="10" fill="#eef5fd" stroke="#8098c0"/><path d="M4.5 7.5h6" stroke="#1f5a9e" stroke-width="1.3"/></svg>
<svg class="a" style="left:256px;top:128px" width="16" height="16" viewBox="0 0 16 16"><path d="M12.5 3.5h-6v-3l-5.5 4 5.5 4v-3h6z" fill="#fde49a" stroke="#c58a1a" stroke-width="1"/><path d="M3.5 10.5h6v-3l5.5 4-5.5 4v-3h-6z" fill="#fbd96a" stroke="#c58a1a" stroke-width="1"/></svg>
<svg class="a" style="left:284px;top:128px" width="6" height="14" viewBox="0 0 6 14"><circle cx="2.6" cy="2.2" r="1.9" fill="none" stroke="#505050" stroke-width="1"/><circle cx="2.6" cy="6.8" r="1.9" fill="none" stroke="#505050" stroke-width="1"/><circle cx="2.6" cy="11.4" r="1.9" fill="none" stroke="#505050" stroke-width="1"/></svg>
<svg class="a" style="left:8px;top:153px" width="10" height="6" viewBox="0 0 10 6"><path d="M0.5 0.5L4.5 4.5L8.5 0.5" stroke="#404040" stroke-width="1.5" fill="none"/></svg>
<svg class="a" style="left:21px;top:148px" width="16" height="16" viewBox="0 0 16 16"><rect width="16" height="16" fill="#3fb1e5"/><rect x="2" y="5" width="1.7" height="6.5" fill="#fff"/><path d="M5 5h2.2a2.3 2.3 0 0 1 2.3 2.3v1.9a2.3 2.3 0 0 1-2.3 2.3h-2.2zM6.6 6.4v3.7h0.6a0.9 0.9 0 0 0 0.9-0.9v-1.9a0.9 0.9 0 0 0-0.9-0.9z" fill="#fff" fill-rule="evenodd"/><path d="M10.8 5h3.6v1.4h-2v1.2h1.8v1.3h-1.8v1.2h2v1.4h-3.6z" fill="#fff"/></svg>
<svg class="a" style="left:26px;top:173px" width="6" height="9" viewBox="0 0 6 9"><path d="M0.5 0.5L4.5 4L0.5 7.5" stroke="#8a8a8a" stroke-width="1.3" fill="none"/></svg>
<svg class="a" style="left:37px;top:168px" width="16" height="16" viewBox="0 0 16 16"><text x="1" y="6" font-family="Liberation Serif" font-size="6" fill="#666">10</text><path d="M10 0.5v6l5-3z" fill="#4f8ac8" stroke="#2a64a8" stroke-width="0.6"/><ellipse cx="6" cy="10" rx="3.5" ry="3" fill="#6a9ad0" stroke="#2a5a90" stroke-width="0.7"/><path d="M1 8l2 1M1 12l2-1M11 8l-2 1M11 12l-2-1M4 14l1-2M8 14l-1-2" stroke="#2a5a90" stroke-width="0.8"/><text x="10" y="15" font-family="Liberation Serif" font-size="6" fill="#888">01</text></svg>
<svg class="a" style="left:26px;top:193px" width="6" height="9" viewBox="0 0 6 9"><path d="M0.5 0.5L4.5 4L0.5 7.5" stroke="#8a8a8a" stroke-width="1.3" fill="none"/></svg>
<svg class="a" style="left:37px;top:188px" width="16" height="16" viewBox="0 0 16 16"><rect x="7.5" y="0.5" width="8" height="10" fill="#f6f6ee" stroke="#a89a70"/><rect x="4.5" y="2.5" width="8" height="10" fill="#f6f6ee" stroke="#a89a70"/><rect x="0.5" y="6.5" width="8" height="9" fill="#eef3fa" stroke="#a89a70"/><text x="1.8" y="14.3" font-family="Liberation Sans" font-weight="bold" font-size="8" fill="#1c4f9c">h</text></svg>
<svg class="a" style="left:26px;top:213px" width="6" height="9" viewBox="0 0 6 9"><path d="M0.5 0.5L4.5 4L0.5 7.5" stroke="#8a8a8a" stroke-width="1.3" fill="none"/></svg>
<svg class="a" style="left:37px;top:208px" width="16" height="16" viewBox="0 0 16 16"><path d="M0.5 4.5h4l1.5 1.5h6v8.5h-11.5z" fill="#f6d58a" stroke="#c08a2e"/><path d="M0.5 14.5 L3 8.5h12.5l-3 6z" fill="#fbe2a0" stroke="#c08a2e"/><rect x="8.5" y="0.5" width="7" height="7" rx="1" fill="#7aa8e0" stroke="#3d6fb8"/><text x="9.9" y="6.3" font-family="Liberation Sans" font-weight="bold" font-size="6" fill="#fff">C</text></svg>
<svg class="a" style="left:26px;top:233px" width="6" height="9" viewBox="0 0 6 9"><path d="M0.5 0.5L4.5 4L0.5 7.5" stroke="#8a8a8a" stroke-width="1.3" fill="none"/></svg>
<svg class="a" style="left:37px;top:228px" width="16" height="16" viewBox="0 0 16 16"><path d="M0.5 4.5h4l1.5 1.5h6v8.5h-11.5z" fill="#f6d58a" stroke="#c08a2e"/><path d="M0.5 14.5 L3 8.5h12.5l-3 6z" fill="#fbe2a0" stroke="#c08a2e"/><rect x="8.5" y="0.5" width="7" height="7" rx="1" fill="#7aa8e0" stroke="#3d6fb8"/><text x="9.9" y="6.3" font-family="Liberation Sans" font-weight="bold" font-size="6" fill="#fff">C</text></svg>
<svg class="a" style="left:26px;top:253px" width="6" height="9" viewBox="0 0 6 9"><path d="M0.5 0.5L4.5 4L0.5 7.5" stroke="#8a8a8a" stroke-width="1.3" fill="none"/></svg>
<svg class="a" style="left:37px;top:248px" width="16" height="16" viewBox="0 0 16 16"><path d="M0.5 3.5h5l1.5 1.5h7v9.5h-13.5z" fill="#f6d58a" stroke="#c08a2e"/><path d="M0.5 14.5 L3 8.5h12.5l-3 6z" fill="#fbe2a0" stroke="#c08a2e"/></svg>
<svg class="a" style="left:37px;top:268px" width="16" height="16" viewBox="0 0 16 16"><rect x="0" y="0" width="16" height="16" fill="#3fb1e5"/><path d="M2.2 10.8V4h1.8l1.2 3.3 1.2-3.3h1.8v6.8h-1.4v-4.3l-1 2.7h-1.2l-1-2.7v4.3z" fill="#fff"/><path d="M9.5 4.2L13.6 10.6M13.6 4.2L9.5 10.6" stroke="#fff" stroke-width="1.7"/></svg>
<svg class="a" style="left:39px;top:289px" width="16" height="16" viewBox="0 0 16 16"><path d="M0.5 0.5h8.5l2.5 2.5v11h-11z" fill="#fafafa" stroke="#b8b8b8"/><path d="M10.10 6.58 L10.10 8.42 L8.65 8.68 L8.71 8.54 L9.55 9.75 L8.25 11.05 L7.04 10.21 L7.18 10.15 L6.92 11.60 L5.08 11.60 L4.82 10.15 L4.96 10.21 L3.75 11.05 L2.45 9.75 L3.29 8.54 L3.35 8.68 L1.90 8.42 L1.90 6.58 L3.35 6.32 L3.29 6.46 L2.45 5.25 L3.75 3.95 L4.96 4.79 L4.82 4.85 L5.08 3.40 L6.92 3.40 L7.18 4.85 L7.04 4.79 L8.25 3.95 L9.55 5.25 L8.71 6.46 L8.65 6.32Z" fill="#4f5f5f"/><circle cx="6" cy="7.5" r="1.4" fill="#fafafa"/></svg>
<svg class="a" style="left:39px;top:309px" width="16" height="16" viewBox="0 0 16 16"><path d="M0.5 0.5h8l3 3v10.5h-11z" fill="#f4f6fa" stroke="#8a9ab8"/><path d="M8.5 0.5v3h3" fill="#e8d8a0" stroke="#b8a070"/><path d="M2.5 3.5h4M2.5 5.5h7M2.5 7.5h7M2.5 9.5h7M2.5 11.5h5" stroke="#3a5a9a"/></svg>
<svg class="a" style="left:39px;top:329px" width="16" height="16" viewBox="0 0 16 16"><path d="M0.5 0.5h8l3 3v11.5h-11z" fill="#f4f6fa" stroke="#a89060"/><path d="M8.5 0.5v3h3" fill="#e8d8a0" stroke="#a89060"/><path d="M2.5 3.5h5M2.5 5.5h6" stroke="#3a5a9a"/><text x="3.6" y="14" font-family="Liberation Sans" font-weight="bold" font-size="7.2" fill="#1a2f5c">LD</text></svg>
<svg class="a" style="left:312px;top:105px" width="16" height="16" viewBox="0 0 16 16"><path d="M0.5 0.5h7l3.5 3.5v10.5h-10.5z" fill="#eef3fa" stroke="#a89060"/><path d="M7.5 0.5v3.5h3.5" fill="#efe2b0" stroke="#a89060"/><rect x="1.6" y="11" width="1.6" height="1.6" fill="#2a5a9a"/><text x="3.2" y="12.6" font-family="Liberation Sans" font-weight="bold" font-size="10.5" fill="#2a5a9a">c</text></svg>
<svg class="a" style="left:375px;top:108px" width="10" height="10" viewBox="0 0 10 10"><path d="M0 0L9 9M9 0L0 9" stroke="#111" stroke-width="1.1"/></svg>
<svg class="a" style="left:399px;top:105px" width="16" height="16" viewBox="0 0 16 16"><path d="M0.5 0.5h7l3.5 3.5v10.5h-10.5z" fill="#eef3fa" stroke="#a89060"/><path d="M7.5 0.5v3.5h3.5" fill="#efe2b0" stroke="#a89060"/><rect x="1.6" y="11" width="1.6" height="1.6" fill="#2a5a9a"/><text x="3.2" y="12.6" font-family="Liberation Sans" font-weight="bold" font-size="10.5" fill="#2a5a9a">c</text></svg>
<svg class="a" style="left:477px;top:105px" width="16" height="16" viewBox="0 0 16 16"><path d="M0.5 0.5h7l3.5 3.5v10.5h-10.5z" fill="#eef3fa" stroke="#a89060"/><path d="M7.5 0.5v3.5h3.5" fill="#efe2b0" stroke="#a89060"/><rect x="1.6" y="11" width="1.6" height="1.6" fill="#2a5a9a"/><text x="3.2" y="12.6" font-family="Liberation Sans" font-weight="bold" font-size="10.5" fill="#2a5a9a">c</text></svg>
<svg class="a" style="left:630px;top:105px" width="16" height="16" viewBox="0 0 16 16"><path d="M0.5 0.5h7l3.5 3.5v10.5h-10.5z" fill="#eef3fa" stroke="#a89060"/><path d="M7.5 0.5v3.5h3.5" fill="#efe2b0" stroke="#a89060"/><rect x="1.6" y="11" width="1.6" height="1.6" fill="#2a5a9a"/><text x="3.4" y="12.6" font-family="Liberation Sans" font-weight="bold" font-size="10" fill="#2a5a9a">S</text></svg>
<svg class="a" style="left:786px;top:106px" width="10" height="5" viewBox="0 0 10 5"><rect x="0.5" y="0.5" width="9" height="4" fill="#fff" stroke="#000" stroke-width="1"/></svg>
<svg class="a" style="left:809px;top:106px" width="10" height="10" viewBox="0 0 10 10"><rect x="0.5" y="0.5" width="9" height="9" fill="#fff" stroke="#000" stroke-width="1"/><path d="M0.5 2.5h9" stroke="#000"/></svg>
<svg class="a" style="left:804px;top:130px" width="8" height="6" viewBox="0 0 8 6"><path d="M0.5 5L4 1.5L7.5 5" stroke="#555" stroke-width="1.6" fill="none"/></svg>
<svg class="a" style="left:804px;top:517px" width="8" height="6" viewBox="0 0 8 6"><path d="M0.5 1L4 4.5L7.5 1" stroke="#555" stroke-width="1.6" fill="none"/></svg>
<svg class="a" style="left:352px;top:533px" width="6" height="8" viewBox="0 0 6 8"><path d="M5 0.5L1.5 4L5 7.5" stroke="#444" stroke-width="1.6" fill="none"/></svg>
<svg class="a" style="left:788px;top:533px" width="6" height="8" viewBox="0 0 6 8"><path d="M1 0.5L4.5 4L1 7.5" stroke="#444" stroke-width="1.6" fill="none"/></svg>
<svg class="a" style="left:338px;top:442px" width="9" height="9" viewBox="0 0 9 9"><circle cx="4.5" cy="4.5" r="4" fill="#f4f4f4" stroke="#8a8aa0"/><path d="M2 4.5h5" stroke="#555" stroke-width="1"/></svg>
<svg class="a" style="left:338px;top:502px" width="9" height="9" viewBox="0 0 9 9"><circle cx="4.5" cy="4.5" r="4" fill="#f4f4f4" stroke="#8a8aa0"/><path d="M2 4.5h5" stroke="#555" stroke-width="1"/></svg>
<svg class="a" style="left:840px;top:105px" width="16" height="16" viewBox="0 0 16 16"><rect x="0.5" y="0.5" width="5" height="5" fill="#bfe0fa" stroke="#2a7ac8"/><rect x="0.5" y="9.5" width="5" height="5" fill="#bfe0fa" stroke="#2a7ac8"/><path d="M7 3h6M7 12h6M9 7.5h1M11 7.5h2" stroke="#2a7ac8" stroke-width="1.2"/><rect x="6.5" y="6" width="2.5" height="2.5" fill="none" stroke="#2a7ac8"/></svg>
<svg class="a" style="left:887px;top:108px" width="10" height="10" viewBox="0 0 10 10"><path d="M0 0L9 9M9 0L0 9" stroke="#111" stroke-width="1.1"/></svg>
<svg class="a" style="left:910px;top:105px" width="16" height="16" viewBox="0 0 16 16"><circle cx="7" cy="7" r="6.2" fill="none" stroke="#2a9a5a" stroke-width="1.5"/><circle cx="7" cy="7" r="3.6" fill="none" stroke="#2a9a5a" stroke-width="1.3"/><circle cx="7" cy="7" r="1.6" fill="#1e6e3a"/></svg>
<svg class="a" style="left:965px;top:106px" width="10" height="5" viewBox="0 0 10 5"><rect x="0.5" y="0.5" width="9" height="4" fill="#fff" stroke="#000" stroke-width="1"/></svg>
<svg class="a" style="left:988px;top:106px" width="10" height="10" viewBox="0 0 10 10"><rect x="0.5" y="0.5" width="9" height="9" fill="#fff" stroke="#000" stroke-width="1"/><path d="M0.5 2.5h9" stroke="#000"/></svg>
<svg class="a" style="left:852px;top:129px" width="16" height="16" viewBox="0 0 16 16"><rect x="0.5" y="0.5" width="10" height="10" fill="#e4ecf7" stroke="#a8b8d4"/><rect x="2.5" y="2.5" width="10" height="10" fill="#eef5fd" stroke="#8098c0"/><path d="M4.5 7.5h6" stroke="#1f5a9e" stroke-width="1.3"/></svg>
<svg class="a" style="left:873px;top:127px" width="16" height="16" viewBox="0 0 16 16"><path d="M2.5 1.5v12.5M0.3 11.5l2.2 3 2.2-3" stroke="#5a5a5a" stroke-width="1.1" fill="none"/><text x="5" y="8" font-family="Liberation Sans" font-weight="bold" font-size="10" fill="#2a8a6a">a</text><text x="8.5" y="15.5" font-family="Liberation Sans" font-weight="bold" font-size="10" fill="#8a2a9a">z</text></svg>
<svg class="a" style="left:897px;top:127px" width="16" height="16" viewBox="0 0 16 16"><circle cx="7.5" cy="7.5" r="5.3" fill="#7bbcf0" stroke="#3a8ad8" stroke-width="1.6"/><circle cx="6.5" cy="6" r="2" fill="#e6f2fc"/><path d="M1 0.5L14 13.5" stroke="#102a7a" stroke-width="1.3"/></svg>
<svg class="a" style="left:920px;top:127px" width="16" height="16" viewBox="0 0 16 16"><circle cx="6" cy="9" r="3.6" fill="#a8a8a8" stroke="#7a7a7a"/><path d="M1 4L11.5 14.5" stroke="#102a7a" stroke-width="1.3"/><text x="9" y="7" font-family="Liberation Sans" font-size="8" fill="#d02040">S</text></svg>
<svg class="a" style="left:946px;top:131px" width="8" height="8" viewBox="0 0 8 8"><circle cx="4" cy="4" r="3.5" fill="#5aa868" stroke="#2a7a3a" stroke-width="0.9"/></svg>
<svg class="a" style="left:966px;top:127px" width="16" height="16" viewBox="0 0 16 16"><path d="M5 1v14M10 1v14M1 5h13.5M1 10.5h13.5" stroke="#111" stroke-width="2.3"/><path d="M1 0.5L15 14.5" stroke="#777" stroke-width="1"/></svg>
<svg class="a" style="left:994px;top:128px" width="6" height="14" viewBox="0 0 6 14"><circle cx="2.6" cy="2.2" r="1.9" fill="none" stroke="#505050" stroke-width="1"/><circle cx="2.6" cy="6.8" r="1.9" fill="none" stroke="#505050" stroke-width="1"/><circle cx="2.6" cy="11.4" r="1.9" fill="none" stroke="#505050" stroke-width="1"/></svg>
<svg class="a" style="left:863px;top:151px" width="12" height="11" viewBox="0 0 12 11"><rect x="0" y="0" width="5" height="5" fill="#2e6eb0"/><rect x="7" y="0" width="4" height="10" fill="#3f80c0"/><rect x="1" y="6" width="10" height="4" fill="#3a7abb"/></svg>
<svg class="a" style="left:863px;top:171px" width="12" height="11" viewBox="0 0 12 11"><rect x="0" y="0" width="5" height="5" fill="#2e6eb0"/><rect x="7" y="0" width="4" height="10" fill="#3f80c0"/><rect x="1" y="6" width="10" height="4" fill="#3a7abb"/></svg>
<svg class="a" style="left:863px;top:191px" width="12" height="11" viewBox="0 0 12 11"><rect x="0" y="0" width="5" height="5" fill="#2e6eb0"/><rect x="7" y="0" width="4" height="10" fill="#3f80c0"/><rect x="1" y="6" width="10" height="4" fill="#3a7abb"/></svg>
<svg class="a" style="left:863px;top:211px" width="12" height="11" viewBox="0 0 12 11"><rect x="0" y="0" width="5" height="5" fill="#2e6eb0"/><rect x="7" y="0" width="4" height="10" fill="#3f80c0"/><rect x="1" y="6" width="10" height="4" fill="#3a7abb"/></svg>
<svg class="a" style="left:863px;top:231px" width="12" height="11" viewBox="0 0 12 11"><rect x="0" y="0" width="5" height="5" fill="#2e6eb0"/><rect x="7" y="0" width="4" height="10" fill="#3f80c0"/><rect x="1" y="6" width="10" height="4" fill="#3a7abb"/></svg>
<svg class="a" style="left:861px;top:249px" width="14" height="15" viewBox="0 0 14 15"><path d="M0 7.5h13M2.5 2.5v10M10.5 2.5v10M6 0.5h1.5M6 14.5h1.5" stroke="#2a9a4a" stroke-width="1.1"/></svg>
<svg class="a" style="left:864px;top:272px" width="8" height="8" viewBox="0 0 8 8"><circle cx="4" cy="4" r="3.5" fill="#5aa868" stroke="#2a7a3a" stroke-width="0.9"/></svg>
<svg class="a" style="left:864px;top:292px" width="8" height="8" viewBox="0 0 8 8"><circle cx="4" cy="4" r="3.5" fill="#5aa868" stroke="#2a7a3a" stroke-width="0.9"/></svg>
<svg class="a" style="left:864px;top:312px" width="8" height="8" viewBox="0 0 8 8"><circle cx="4" cy="4" r="3.5" fill="#5aa868" stroke="#2a7a3a" stroke-width="0.9"/></svg>
<svg class="a" style="left:861px;top:329px" width="15" height="15" viewBox="0 0 15 15"><circle cx="7.5" cy="7.5" r="3.6" fill="#5aa868" stroke="#2a7a3a" stroke-width="0.9"/><path d="M0.5 14L14 0.5" stroke="#7a7a7a" stroke-width="1.4"/></svg>
<svg class="a" style="left:840px;top:533px" width="6" height="8" viewBox="0 0 6 8"><path d="M5 0.5L1.5 4L5 7.5" stroke="#444" stroke-width="1.6" fill="none"/></svg>
<svg class="a" style="left:997px;top:533px" width="6" height="8" viewBox="0 0 6 8"><path d="M1 0.5L4.5 4L1 7.5" stroke="#444" stroke-width="1.6" fill="none"/></svg>
<svg class="a" style="left:309px;top:556px" width="16" height="16" viewBox="0 0 16 16"><path d="M0.5 0.5h10l3.5 3v11h-13.5z" fill="#eef3fb" stroke="#7d90b0"/><path d="M7 1v14M1 7.5h12" stroke="#9fb0cc"/><circle cx="4" cy="4" r="2.6" fill="#e02020"/><path d="M1.5 13.5 L4 9.5 L6.5 13.5Z" fill="#f5b030"/></svg>
<svg class="a" style="left:378px;top:556px" width="16" height="16" viewBox="0 0 16 16"><rect x="2.5" y="2.5" width="11" height="12" fill="#f4efe0" stroke="#a28e5e"/><rect x="5" y="0.5" width="6" height="3" rx="1" fill="#c8c8c8" stroke="#888"/><path d="M7 7h5M7 9.5h5M7 12h5" stroke="#5a7fb5"/><path d="M0.5 9 L3.5 12.5 L8 5" stroke="#1e70c8" stroke-width="1.8" fill="none"/></svg>
<svg class="a" style="left:442px;top:557px" width="16" height="16" viewBox="0 0 16 16"><rect x="0.5" y="0.5" width="13" height="10" rx="1.5" fill="#dbe8f8" stroke="#2a5aa8" stroke-width="1.2"/><path d="M3 3.5h6M3 6h8" stroke="#2a5aa8"/><path d="M4 13h6" stroke="#2a5aa8" stroke-width="2"/><path d="M7 10.5v2" stroke="#2a5aa8" stroke-width="1.5"/></svg>
<svg class="a" style="left:509px;top:561px" width="9" height="9" viewBox="0 0 9 9"><path d="M0 0L9 9M9 0L0 9" stroke="#111" stroke-width="1.1"/></svg>
<svg class="a" style="left:531px;top:556px" width="16" height="16" viewBox="0 0 16 16"><rect x="0.5" y="0.5" width="14" height="13" fill="#f3f6fa" stroke="#6b7ea0"/><rect x="1" y="1" width="13" height="2.5" fill="#9db0cf"/><path d="M1 6h13M1 8.5h13M1 11h13M5 3.5v10" stroke="#8a9cba"/></svg>
<svg class="a" style="left:611px;top:557px" width="10" height="5" viewBox="0 0 10 5"><rect x="0.5" y="0.5" width="9" height="4" fill="#fff" stroke="#000" stroke-width="1"/></svg>
<svg class="a" style="left:634px;top:557px" width="10" height="10" viewBox="0 0 10 10"><rect x="0.5" y="0.5" width="9" height="9" fill="#fff" stroke="#000" stroke-width="1"/><path d="M0.5 2.5h9" stroke="#000"/></svg>
<svg class="a" style="left:357px;top:582px" width="11" height="11" viewBox="0 0 11 11"><rect x="0.5" y="0.5" width="10" height="10" rx="1.5" fill="#c4c4c4" stroke="#a8a8a8"/><rect x="2.5" y="2.5" width="6" height="6" fill="#b4b4b4"/></svg>
<svg class="a" style="left:379px;top:580px" width="13" height="13" viewBox="0 0 13 13"><path d="M2 2L11 11M11 2L2 11" stroke="#6a6a6a" stroke-width="3" stroke-linecap="round"/></svg>
<svg class="a" style="left:400px;top:579px" width="16" height="16" viewBox="0 0 16 16"><path d="M1.5 1.5L8.5 8.5M8.5 1.5L1.5 8.5" stroke="#9a9a9a" stroke-width="2.4" stroke-linecap="round"/><path d="M1.5 1.5L8.5 8.5M8.5 1.5L1.5 8.5" stroke="#f4f4f4" stroke-width="0.9" stroke-linecap="round"/><path d="M6 6L14 14M14 6L6 14" stroke="#6a6a6a" stroke-width="3" stroke-linecap="round"/></svg>
<div class="a" style="left:422px;top:578px;width:1px;height:18px;background:#8c8c8c;"></div>
<svg class="a" style="left:432px;top:579px" width="16" height="16" viewBox="0 0 16 16"><path d="M0.5 0.5h8l3.5 3.5v10h-11.5z" fill="#f3f3f3" stroke="#a89a70"/><path d="M2 3.5h6M2 5.5h7M2 7.5h7M2 9.5h5M2 11.5h5" stroke="#4b74b5"/><path d="M9 10l5 5M14 10l-5 5" stroke="#707070" stroke-width="2"/></svg>
<svg class="a" style="left:455px;top:579px" width="16" height="16" viewBox="0 0 16 16"><rect x="5.5" y="0.5" width="9" height="14" fill="#eef3fa" stroke="#6b7ea0"/><rect x="10.5" y="1.5" width="3" height="12" fill="#dfe7f2" stroke="#6b7ea0"/><path d="M2.5 8v-2a2.5 2.5 0 0 1 5 0v2" stroke="#8a6a20" fill="none" stroke-width="1.2"/><rect x="0.5" y="8.5" width="9" height="6" fill="#f2c450" stroke="#9a7218"/></svg>
<svg class="a" style="left:478px;top:579px" width="16" height="16" viewBox="0 0 16 16"><path d="M0.5 0.5h7.5l3 3v10h-10.5z" fill="#f8f8f6" stroke="#b0a070"/><path d="M2 3.5h6M2 5.5h5M2 7.5h4M2 9.5h2M2 11.5h2" stroke="#5070b0"/><path d="M12.5 2.5h2v8.5h-6v2.2l-3.8-3.7 3.8-3.7v2.2h4z" fill="#fde8a0" stroke="#c08a20" stroke-linejoin="round"/></svg>
<div class="a" style="left:497px;top:576px;width:45px;height:19px;background:#cce4f7;border:1px solid #99c9ef"></div>
<div class="a" style="left:520px;top:577px;width:1px;height:19px;background:#99c9ef;"></div>
<svg class="a" style="left:502px;top:580px" width="16" height="16" viewBox="0 0 16 16"><rect x="4.5" y="0.5" width="11" height="8" fill="#eaf2fb" stroke="#2a5aa8"/><path d="M6.5 3h6M6.5 5.5h7" stroke="#2a5aa8"/><rect x="0.5" y="5.5" width="7" height="5" fill="#f6f9fd" stroke="#2a5aa8"/><path d="M2 12.5h4" stroke="#2a5aa8" stroke-width="1.5"/></svg>
<svg class="a" style="left:525px;top:580px" width="16" height="16" viewBox="0 0 16 16"><rect x="4.5" y="0.5" width="11" height="8" fill="#eaf2fb" stroke="#2a5aa8"/><path d="M6.5 2l3 4M9.5 2l-3 4" stroke="#e02020" stroke-width="1.4"/><path d="M11 3h3M11 5.5h3" stroke="#2a5aa8"/><rect x="0.5" y="5.5" width="7" height="5" fill="#f6f9fd" stroke="#2a5aa8"/><path d="M2 12.5h4" stroke="#2a5aa8" stroke-width="1.5"/></svg>
<div class="a" style="left:545px;top:577px;width:1px;height:18px;background:#8c8c8c;"></div>
<svg class="a" style="left:556px;top:579px" width="16" height="16" viewBox="0 0 16 16"><rect x="0.5" y="4.5" width="14" height="11" fill="#eef6fd" stroke="#a68a4e"/><rect x="1" y="5" width="13" height="2" fill="#3d8fd6"/><path d="M7 10 L10 6" stroke="#555" stroke-width="1"/><circle cx="12" cy="3.5" r="3" fill="#3aa04a" stroke="#1e6e2a"/></svg>
<svg class="a" style="left:580px;top:580px" width="16" height="16" viewBox="0 0 16 16"><rect x="0.5" y="0.5" width="12" height="9.5" rx="1.5" fill="#dbe8f8" stroke="#2a5aa8" stroke-width="1.2"/><path d="M3 3.5h5M3 6h7" stroke="#2a5aa8"/><path d="M3.5 12.5h6" stroke="#2a5aa8" stroke-width="2"/></svg>
<svg class="a" style="left:602px;top:586px" width="8" height="4" viewBox="0 0 8 4"><path d="M0 0H8L4 4Z" fill="#111"/></svg>
<svg class="a" style="left:619px;top:579px" width="16" height="16" viewBox="0 0 16 16"><rect x="0.5" y="2.5" width="13" height="11" fill="#eef6fd" stroke="#a68a4e"/><rect x="1" y="3" width="12" height="2" fill="#3d8fd6"/><path d="M3 13 Q11 12 12 6" stroke="#f2d36b" fill="none"/><g transform="translate(7.5,-1)"><path d="M4 0.3 L5.4 2.6 L7.7 4 L5.4 5.4 L4 7.7 L2.6 5.4 L0.3 4 L2.6 2.6 Z" fill="#fff2b3" stroke="#c39a26" stroke-width="1"/><path d="M4 2V6M2 4H6" stroke="#f7dc6a" stroke-width="1"/></g></svg>
<svg class="a" style="left:642px;top:586px" width="8" height="4" viewBox="0 0 8 4"><path d="M0 0H8L4 4Z" fill="#111"/></svg>
<svg class="a" style="left:645px;top:624px" width="8" height="6" viewBox="0 0 8 6"><path d="M0.5 5L4 1.5L7.5 5" stroke="#555" stroke-width="1.6" fill="none"/></svg>
<svg class="a" style="left:642px;top:702px" width="8" height="6" viewBox="0 0 8 6"><path d="M0.5 1L4 4.5L7.5 1" stroke="#555" stroke-width="1.6" fill="none"/></svg>
<svg class="a" style="left:309px;top:718px" width="6" height="8" viewBox="0 0 6 8"><path d="M5 0.5L1.5 4L5 7.5" stroke="#444" stroke-width="1.6" fill="none"/></svg>
<svg class="a" style="left:626px;top:718px" width="6" height="8" viewBox="0 0 6 8"><path d="M1 0.5L4.5 4L1 7.5" stroke="#444" stroke-width="1.6" fill="none"/></svg>
<svg class="a" style="left:664px;top:556px" width="16" height="16" viewBox="0 0 16 16"><g transform="rotate(45 8 8)"><path d="M8 -2.5 L11 2.5 V8 H5 V2.5 Z" fill="#f0cf78" stroke="#a87a30" stroke-width="0.9"/><rect x="5" y="8" width="6" height="3.5" fill="#8e8e8e" stroke="#6a6a6a" stroke-width="0.8"/><path d="M5 11.5h6v4.5a1.5 1.5 0 0 1-1.5 1.5h-3a1.5 1.5 0 0 1-1.5-1.5z" fill="#fff6d0" stroke="#d8c070" stroke-width="0.8"/><circle cx="8" cy="2.5" r="0.8" fill="#2a5a9a"/></g></svg>
<svg class="a" style="left:732px;top:561px" width="9" height="9" viewBox="0 0 9 9"><path d="M0 0L9 9M9 0L0 9" stroke="#111" stroke-width="1.1"/></svg>
<svg class="a" style="left:832px;top:556px" width="16" height="16" viewBox="0 0 16 16"><path d="M3 9 A5 5 0 0 1 11 3" stroke="#c4c4c4" stroke-width="2.2" fill="none"/><path d="M12 6 A5 5 0 0 1 4 12" stroke="#c4c4c4" stroke-width="2.2" fill="none"/><path d="M9 1l4 2-3 3z" fill="#d0d0d0"/><path d="M6 14l-4-2 3-3z" fill="#d0d0d0"/></svg>
<svg class="a" style="left:857px;top:557px" width="11" height="11" viewBox="0 0 11 11"><rect x="0.5" y="0.5" width="10" height="10" rx="1.5" fill="#c4c4c4" stroke="#a8a8a8"/><rect x="2.5" y="2.5" width="6" height="6" fill="#b4b4b4"/></svg>
<svg class="a" style="left:878px;top:555px" width="17" height="17" viewBox="0 0 17 17"><rect x="0.5" y="0.5" width="8" height="9" fill="#f2f2f2" stroke="#b8b8b8"/><path d="M2 3h5M2 5h5M2 7h4" stroke="#c0c0c0"/><path d="M3 15 L5 10 L12 3 L16 2 L15 6 L8 13 Z" fill="#e0e0e0" stroke="#b4b4b4"/><path d="M5 10 L8 13 L10.5 10.5 L7.5 7.5Z" fill="#a0a0a0"/></svg>
<svg class="a" style="left:902px;top:562px" width="8" height="4" viewBox="0 0 8 4"><path d="M0 0H8L4 4Z" fill="#9a9a9a"/></svg>
<svg class="a" style="left:919px;top:555px" width="16" height="16" viewBox="0 0 16 16"><rect x="0.5" y="4.5" width="14" height="11" fill="#eef6fd" stroke="#a68a4e"/><rect x="1" y="5" width="13" height="2" fill="#3d8fd6"/><path d="M7 10 L10 6" stroke="#555" stroke-width="1"/><circle cx="12" cy="3.5" r="3" fill="#3aa04a" stroke="#1e6e2a"/></svg>
<svg class="a" style="left:945px;top:556px" width="6" height="14" viewBox="0 0 6 14"><circle cx="2.6" cy="2.2" r="1.9" fill="none" stroke="#505050" stroke-width="1"/><circle cx="2.6" cy="6.8" r="1.9" fill="none" stroke="#505050" stroke-width="1"/><circle cx="2.6" cy="11.4" r="1.9" fill="none" stroke="#505050" stroke-width="1"/></svg>
<svg class="a" style="left:966px;top:558px" width="10" height="5" viewBox="0 0 10 5"><rect x="0.5" y="0.5" width="9" height="4" fill="#fff" stroke="#000" stroke-width="1"/></svg>
<svg class="a" style="left:989px;top:558px" width="10" height="10" viewBox="0 0 10 10"><rect x="0.5" y="0.5" width="9" height="9" fill="#fff" stroke="#000" stroke-width="1"/><path d="M0.5 2.5h9" stroke="#000"/></svg>
<svg class="a" style="left:697px;top:735px" width="16" height="16" viewBox="0 0 16 16"><path d="M3 6 A4 4 0 0 1 9 2" stroke="#d9a520" stroke-width="2" fill="none"/><path d="M8 0l3 2.5-3 2z" fill="#e8b830"/><circle cx="5" cy="11" r="4.2" fill="#eef2f8" stroke="#8a9ab8"/><circle cx="5" cy="11" r="1.2" fill="#8a9ab8"/><rect x="8.5" y="6.5" width="7" height="6" fill="#dfe9f6" stroke="#3a6ab0"/><path d="M10 14.5h4" stroke="#3a6ab0" stroke-width="1.4"/></svg>
<div class="a" style="left:724px;top:736px;width:2px;height:2px;background:#b8ad98;"></div>
<div class="a" style="left:724px;top:740px;width:2px;height:2px;background:#b8ad98;"></div>
<div class="a" style="left:724px;top:744px;width:2px;height:2px;background:#b8ad98;"></div>
<div class="a" style="left:724px;top:748px;width:2px;height:2px;background:#b8ad98;"></div>
<div class="a" style="left:1px;top:0px;width:1px;height:754px;background:#fff;"></div>
<div class="a" style="left:0px;top:0px;width:1px;height:754px;background:#0c1220;"></div>
</body></html>
